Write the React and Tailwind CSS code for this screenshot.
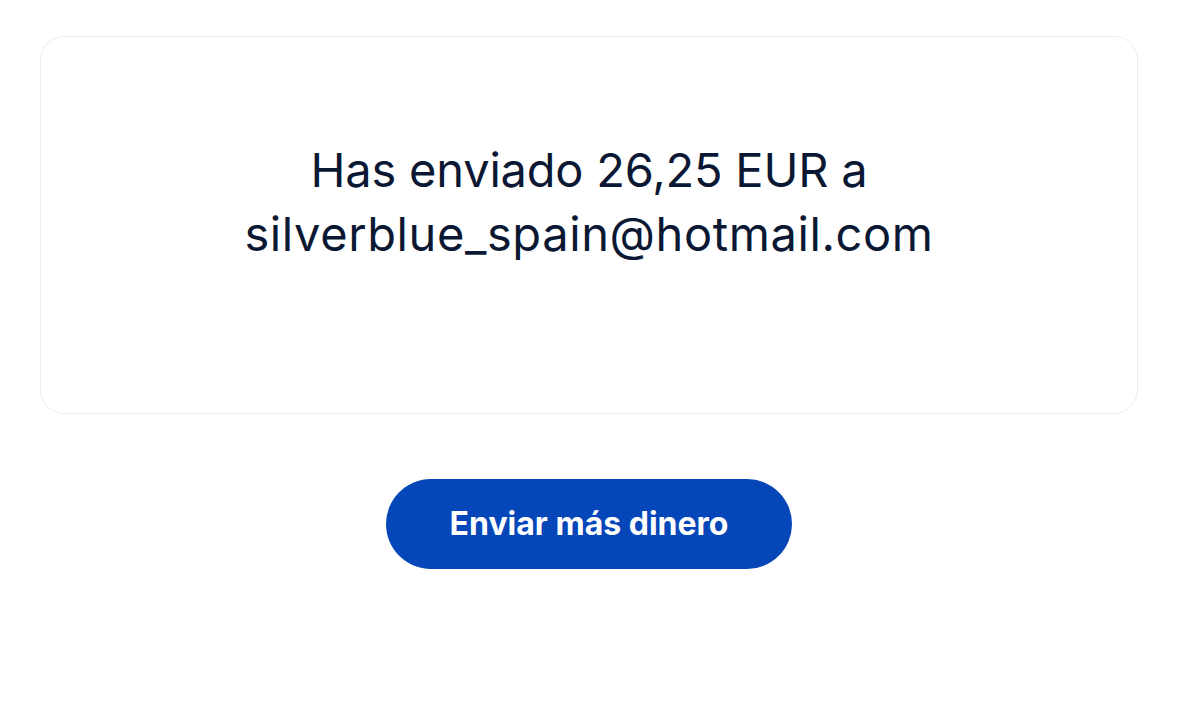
import React from "react";

function App() {
  return (
    <div className="min-h-screen bg-white font-['Inter','Liberation_Sans',sans-serif]">
      <div className="ml-10 w-[1098px] pt-9">
        <div className="border border-[#ececec] rounded-3xl h-[378px] pt-[101px] px-8">
          <h1 className="text-center text-[47px] leading-[64px] font-normal tracking-[-0.2px] text-[#0b1833]">
            Has enviado 26,25 EUR a
            <br />
            <span className="tracking-[0.6px]">silverblue_spain@hotmail.com</span>
          </h1>
        </div>

        <div className="flex justify-center mt-[65px]">
          <button className="w-[406px] h-[90px] rounded-full bg-[#0546b8] text-white text-[32px] font-bold">
            Enviar más dinero
          </button>
        </div>
      </div>
    </div>
  );
}

export default App;
